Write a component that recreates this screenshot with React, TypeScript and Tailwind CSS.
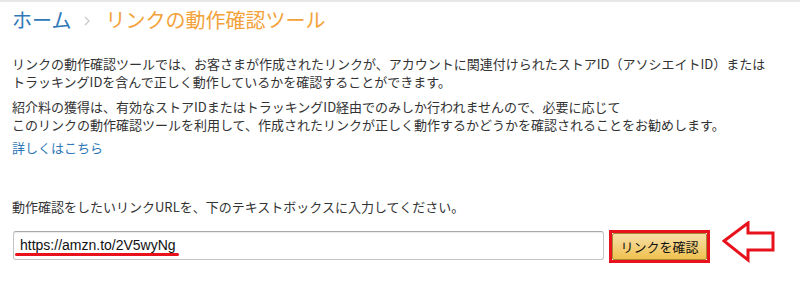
import React from "react";

const jp = "font-['Noto_Sans_CJK_JP',sans-serif]";

function LeftArrow() {
  return (
    <svg width="56" height="44" viewBox="0 0 56 44" className="block">
      <polygon
        points="2,20 26,2 26,12 51,12 51,29 26,29 26,39"
        fill="none"
        stroke="#e8121d"
        strokeWidth="3"
        strokeLinejoin="miter"
      />
    </svg>
  );
}

function Chevron() {
  return (
    <svg width="6" height="10" viewBox="0 0 6 10" className="block">
      <path d="M1 1l4 4-4 4" fill="none" stroke="#c8c8c8" strokeWidth="1.3" />
    </svg>
  );
}

export default function App() {
  return (
    <div className={`w-[800px] h-[285px] bg-white border-t-2 border-[#e7e7e7] pl-3 text-[#333] ${jp}`}>
      <div className="pt-1 flex items-center text-[20px] leading-[28px]">
        <span className="text-[#2f78b8]">ホーム</span>
        <span className="ml-[13px] mr-[15px] mt-[2px]">
          <Chevron />
        </span>
        <span className="text-[#f3a23a]">リンクの動作確認ツール</span>
      </div>

      <p className="mt-[21px] text-[13px] leading-[18px]">
        リンクの動作確認ツールでは、お客さまが作成されたリンクが、アカウントに関連付けられたストアID（アソシエイトID）または
        <br />
        トラッキングIDを含んで正しく動作しているかを確認することができます。
      </p>
      <p className="mt-[7px] text-[13px] leading-[18px]">
        紹介料の獲得は、有効なストアIDまたはトラッキングID経由でのみしか行われませんので、必要に応じて
        <br />
        このリンクの動作確認ツールを利用して、作成されたリンクが正しく動作するかどうかを確認されることをお勧めします。
      </p>
      <p className="mt-[5px] text-[13px] leading-[18px] text-[#2f78b8]">詳しくはこちら</p>

      <p className="mt-[41px] text-[13px] leading-[18px]">
        動作確認をしたいリンクURLを、下のテキストボックスに入力してください。
      </p>

      <div className="mt-[5px] flex items-start">
        <div className="relative ml-[1px] mt-[10px] w-[591px] h-[29px] rounded-[3px] border border-[#c4c4c4] border-t-[#a9a9a9] shadow-[inset_0_1px_0_rgba(0,0,0,0.07)] flex items-center pl-[6px]">
          <span className="font-['Liberation_Sans',Arial,sans-serif] text-[14px] text-[#111]">
            https://amzn.to/2V5wyNg
          </span>
          <div className="absolute left-[1px] top-[21px] w-[164px] h-[3px] rounded-full bg-[#e8121d]" />
        </div>

        <div className="ml-[5px] mt-[9px] w-[101px] h-[33px] border-[3px] border-[#e8121d] flex">
          <button className="flex-1 border border-[#a88734] rounded-[2px] bg-gradient-to-b from-[#f7dfa5] to-[#f0c14b] text-[13px] text-[#111] leading-none">
            リンクを確認
          </button>
        </div>

        <div className="ml-[12px]">
          <LeftArrow />
        </div>
      </div>
    </div>
  );
}
